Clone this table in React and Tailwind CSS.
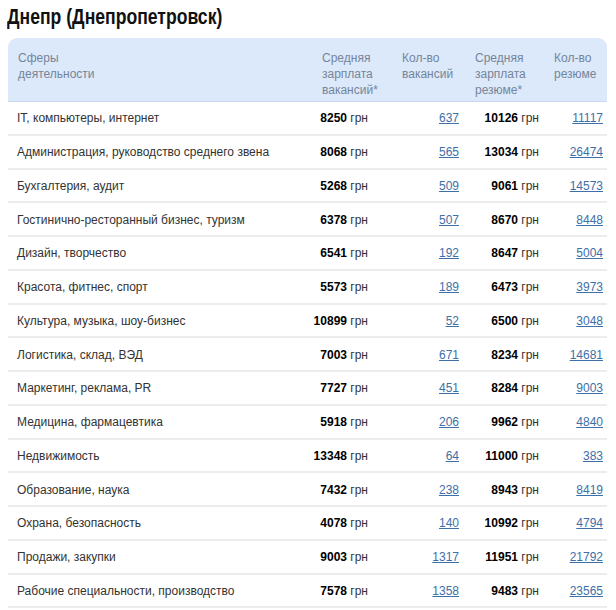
const rows = [
  ["IT, компьютеры, интернет", "8250", "637", "10126", "11117"],
  ["Администрация, руководство среднего звена", "8068", "565", "13034", "26474"],
  ["Бухгалтерия, аудит", "5268", "509", "9061", "14573"],
  ["Гостинично-ресторанный бизнес, туризм", "6378", "507", "8670", "8448"],
  ["Дизайн, творчество", "6541", "192", "8647", "5004"],
  ["Красота, фитнес, спорт", "5573", "189", "6473", "3973"],
  ["Культура, музыка, шоу-бизнес", "10899", "52", "6500", "3048"],
  ["Логистика, склад, ВЭД", "7003", "671", "8234", "14681"],
  ["Маркетинг, реклама, PR", "7727", "451", "8284", "9003"],
  ["Медицина, фармацевтика", "5918", "206", "9962", "4840"],
  ["Недвижимость", "13348", "64", "11000", "383"],
  ["Образование, наука", "7432", "238", "8943", "8419"],
  ["Охрана, безопасность", "4078", "140", "10992", "4794"],
  ["Продажи, закупки", "9003", "1317", "11951", "21792"],
  ["Рабочие специальности, производство", "7578", "1358", "9483", "23565"],
];

const cols = "grid grid-cols-[304px_80px_75px_80px_60px]";

function Money({ value }) {
  return (
    <span>
      <b className="font-bold text-black">{value}</b> грн
    </span>
  );
}

function Count({ value }) {
  return (
    <a href="#" className="text-[#3d6fa8] underline">
      {value}
    </a>
  );
}

export default function App() {
  return (
    <div
      className="w-[616px] h-[610px] overflow-hidden bg-white"
      style={{ fontFamily: '"Liberation Sans", Arial, sans-serif' }}
    >
      <h1 className="pl-[7px] pt-[5px] h-[38px] text-[22px] font-bold text-[#111] leading-[24px]">
        <span className="inline-block origin-left scale-x-[0.8] whitespace-nowrap">
          Днепр (Днепропетровск)
        </span>
      </h1>

      <div className="ml-[8px] w-[599px]">
        <div
          className={`${cols} h-[64px] bg-[#dce9fa] rounded-t-[9px] border-b border-[#c9d9ee] text-[12px] leading-[16px] text-[#74859a] pt-[12px]`}
        >
          <div className="pl-[10px]">
            Сферы
            <br />
            деятельности
          </div>
          <div className="pl-[10px]">
            Средняя
            <br />
            зарплата
            <br />
            вакансий*
          </div>
          <div className="pl-[10px]">
            Кол-во
            <br />
            вакансий
          </div>
          <div className="pl-[8px]">
            Средняя
            <br />
            зарплата
            <br />
            резюме*
          </div>
          <div className="pl-[7px]">
            Кол-во
            <br />
            резюме
          </div>
        </div>

        {rows.map((r) => (
          <div
            key={r[0]}
            className={`${cols} h-[33.75px] items-center border-b-2 border-[#ececec] text-[12px] text-[#333] pt-[1px]`}
          >
            <div className="pl-[9px]">{r[0]}</div>
            <div className="text-right pr-[24px]">
              <Money value={r[1]} />
            </div>
            <div className="text-right pr-[8px]">
              <Count value={r[2]} />
            </div>
            <div className="text-right pr-[8px]">
              <Money value={r[3]} />
            </div>
            <div className="text-right pr-[4px]">
              <Count value={r[4]} />
            </div>
          </div>
        ))}
      </div>
    </div>
  );
}
